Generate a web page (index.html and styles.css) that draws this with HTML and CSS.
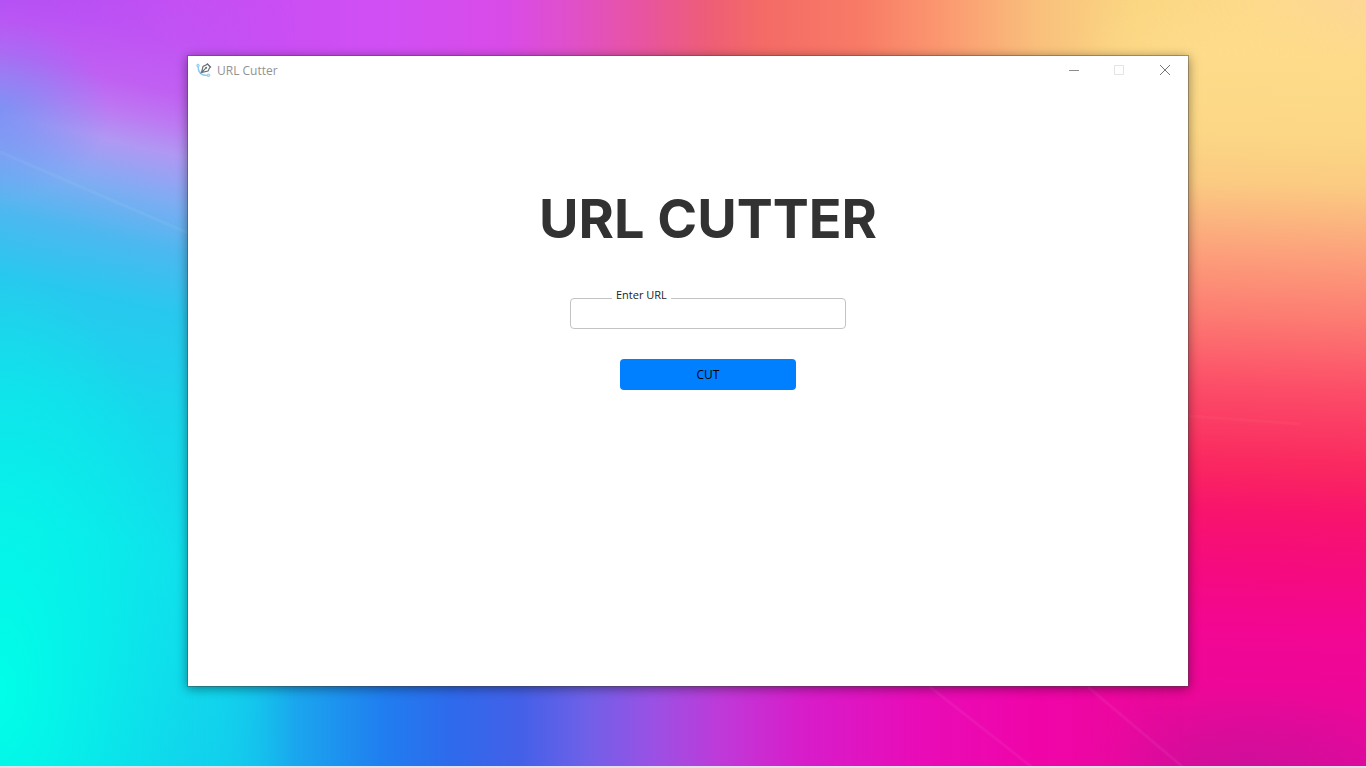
FILE: index.html
```html
<!DOCTYPE html>
<html lang="en">
<head>
<meta charset="utf-8">
<meta name="viewport" content="width=device-width, initial-scale=1">
<title>URL Cutter</title>
<link rel="stylesheet" href="styles.css">
</head>
<body class="desktop">
<div class="wallpaper" aria-hidden="true">
  <div class="wallpaper-bottom"></div>
  <div class="wallpaper-left"></div>
  <div class="wallpaper-right"></div>
  <svg class="wallpaper-rays" viewBox="0 0 1366 768" preserveAspectRatio="none">
    <path d="M0 152L188 233" stroke="#fff" stroke-opacity=".05" stroke-width="3"/>
    <path d="M930 687L1033 768M1088 687L1184 768" stroke="#fff" stroke-opacity=".05" stroke-width="3"/>
    <path d="M1189 416L1300 424" stroke="#fff" stroke-opacity=".03" stroke-width="3"/>
  </svg>
</div>
<main class="window">
  <header class="titlebar">
    <svg class="app-icon" viewBox="0 0 16 16" fill="none" aria-hidden="true">
      <path d="M2 4C2 9.500 5 13.500 11.500 13.500" stroke="#8ecbf5" stroke-width="1.600"/>
      <circle cx="2" cy="3.500" r="1.300" stroke="#8ecbf5" fill="#c3e4fa"/>
      <circle cx="12.500" cy="13.300" r="1.300" stroke="#8ecbf5" fill="#c3e4fa"/>
      <path d="M5.500 10.500L7 4.500L11.500 2.200L14 5L12 9L5.500 10.500L9.800 6.200M11 1.300L15 5.500" stroke="#666c72" stroke-width="1.100"/>
      <circle cx="10.200" cy="5.800" r="1" fill="#666c72"/>
    </svg>
    <span class="titlebar-text">URL Cutter</span>
    <div class="controls">
      <button class="control" type="button" aria-label="Minimize"><svg class="control-icon" viewBox="0 0 11 11"><path d="M1 5.500h10" stroke="#8c8c8c"/></svg></button>
      <button class="control" type="button" aria-label="Maximize" disabled><svg class="control-icon" viewBox="0 0 11 11"><path d="M.500.500h9v9h-9z" fill="none" stroke="#e4e4e4"/></svg></button>
      <button class="control" type="button" aria-label="Close"><svg class="control-icon" viewBox="0 0 11 11"><path d="M0 0l10 10M10 0l-10 10" stroke="#777"/></svg></button>
    </div>
  </header>
  <form class="content">
    <h1 class="heading">URL CUTTER</h1>
    <div class="field">
      <label class="field-label" for="url">Enter URL</label>
      <input class="field-input" id="url" type="text">
    </div>
    <button class="cut" type="button">CUT</button>
  </form>
</main>
<div class="taskbar-edge"></div>
</body>
</html>
```
FILE: styles.css
```css
* { box-sizing: border-box; }

.desktop {
  margin: 0;
  min-height: 100vh;
  padding: 55px 177px 81px 187px;
  display: flex;
  position: relative;
  overflow: hidden;
  font-family: "Open Sans", "Noto Sans", sans-serif;
  font-size: 12px;
}

.wallpaper {
  position: absolute;
  inset: 0;
  z-index: -1;
  background: linear-gradient(90deg, #a94af5 0%, #c44ef3 13%, #d04ff4 28%, #d94be8 37%, #e050c8 42%, #e854a0 47%, #ee5e76 52%, #f46b66 56%, #f87b66 63%, #fb9870 69%, #f9c07c 76%, #fbd682 83%, #fddb8c 92%, #fdd796 100%);
}

.wallpaper-bottom,
.wallpaper-left,
.wallpaper-right,
.wallpaper-rays {
  position: absolute;
  inset: 0;
  width: 100%;
  height: 100%;
}

.wallpaper-bottom {
  background: linear-gradient(90deg, #00ffe8 0%, #0af0e8 8%, #12d2ec 15%, #1aaaee 21%, #207ef0 28%, #2e6aec 33%, #4360e8 38%, #7060e8 43%, #9c50e4 48%, #c038d8 53%, #d81cca 59%, #e80cb8 67%, #f004a8 76%, #ee08a2 82%, #d80e98 88%, #d4109a 94%, #e805ac 100%);
  mask-image: linear-gradient(transparent 40%, #000 70%);
}

.wallpaper-left {
  width: 24%;
  background:
    radial-gradient(ellipse 200px 420px at 0 90%, #00ffe8 0%, #00ffe8aa 35%, #00ffe800 100%),
    radial-gradient(ellipse 110px 90px at 0 110px, #6090f5a0, #6090f500),
    linear-gradient(193deg, #c850f500 0px, #c058f480 70px, #c060f2 125px, #bd78f2 155px, #b098f3 185px, #80acf3 230px, #4cb8ef 280px, #28c8ee 340px, #16d8ec 450px, #10dfec 580px, #12cfec 820px);
  mask-image: linear-gradient(90deg, #000 57%, transparent 90%);
}

.wallpaper-right {
  left: auto;
  right: 0;
  width: 24%;
  background:
    radial-gradient(ellipse 170px 80px at 64% 100%, #c0149490, #c0149400),
    linear-gradient(182deg, #fdda8800 0%, #fddb8a 8%, #fcd886 17%, #fbcb82 24%, #fca57c 32%, #fc7c72 41%, #fc4e68 50%, #fa2860 60%, #f8146c 66%, #f50a80 74%, #f20694 82%, #ec0799 90%, #e008a0 100%);
  mask-image: linear-gradient(270deg, #000 54%, transparent 90%);
}

.window {
  flex: 1;
  display: flex;
  flex-direction: column;
  background: #fff;
  background-clip: padding-box;
  border: 1px solid #4446;
  box-shadow: 0 2px 10px #0006;
}

.titlebar {
  display: flex;
  align-items: center;
  height: 28px;
  padding-left: 8px;
  gap: 5px;
  color: #929292;
}

.app-icon { width: 16px; height: 16px; }

.controls { display: flex; margin-left: auto; }

.control {
  width: 46px;
  height: 28px;
  padding: 0;
  border: 0;
  background: none;
  display: grid;
  place-items: center;
}

.control-icon { width: 11px; height: 11px; }

.content {
  display: flex;
  flex-direction: column;
  align-items: center;
  padding: 100px 0 0 40px;
}

.heading {
  margin: 0;
  color: #323232;
  font: bold 54px/70px Inter, sans-serif;
}

.field {
  position: relative;
  width: 276px;
  margin: 44px 0 30px;
}

.field-label {
  position: absolute;
  top: -12px;
  left: 42px;
  padding: 0 4px;
  font-size: 11px;
  line-height: 18px;
  background: #fff;
  color: #222;
}

.field-input {
  display: block;
  width: 100%;
  height: 31px;
  padding: 0 10px;
  border: 1px solid #c3c3c3;
  border-radius: 4px;
  font: inherit;
}

.cut {
  width: 176px;
  height: 31px;
  padding: 0;
  border: 0;
  border-radius: 4px;
  background: #0080ff;
  color: #000;
  font: inherit;
}

.taskbar-edge {
  position: absolute;
  inset: auto 0 0;
  height: 2px;
  background: #e5dfe9;
}
```
